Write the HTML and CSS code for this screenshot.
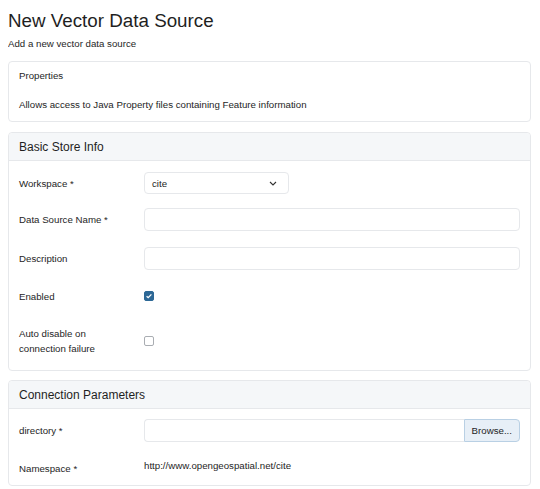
FILE: index.html
```html
<!DOCTYPE html>
<html lang="en">

<head>
  <meta charset="UTF-8">
  <meta name="viewport" content="width=device-width, initial-scale=1.0">
  <title>New Vector Data Source</title>
  <link rel="stylesheet" href="styles.css">
</head>

<body>
  <h1 class="page-title">New Vector Data Source</h1>
  <p class="page-sub">Add a new vector data source</p>

  <div class="panel panel-info">
    <div class="info-name">Properties</div>
    <div class="info-desc">Allows access to Java Property files containing Feature information</div>
  </div>

  <div class="panel">
    <div class="panel-head">Basic Store Info</div>
    <div class="panel-body">
      <div class="field field-select">
        <label>Workspace *</label>
        <div class="select">
          <span>cite</span>
          <svg width="8" height="5" viewBox="0 0 8 5"><path d="M1 1l3 3 3-3" fill="none" stroke="#333" stroke-width="1.1"/></svg>
        </div>
      </div>
      <div class="field field-name">
        <label>Data Source Name *</label>
        <input type="text" class="text-input">
      </div>
      <div class="field field-desc">
        <label>Description</label>
        <input type="text" class="text-input">
      </div>
      <div class="field field-enabled">
        <label>Enabled</label>
        <span class="check checked">
          <svg width="10" height="10" viewBox="0 0 10 10"><path d="M2.6 5.2l1.6 1.5 3.2-3.3" fill="none" stroke="#fff" stroke-width="1.3"/></svg>
        </span>
      </div>
      <div class="field field-auto">
        <label>Auto disable on<br>connection failure</label>
        <span class="check"></span>
      </div>
    </div>
  </div>

  <div class="panel panel-conn">
    <div class="panel-head">Connection Parameters</div>
    <div class="panel-body body-conn">
      <div class="field">
        <label>directory *</label>
        <div class="file-group">
          <input type="text" class="text-input">
          <a href="javascript:;" class="browse">Browse...</a>
        </div>
      </div>
      <div class="field field-ns">
        <label>Namespace *</label>
        <span class="ns-value">http://www.opengeospatial.net/cite</span>
      </div>
    </div>
  </div>
</body>

</html>
```

FILE: styles.css
```css
body {
  margin: 8px 9px 8px 8px;
  font-family: "Liberation Sans", Arial, sans-serif;
  font-size: 9.7px;
  color: #1e1e1e;
  background: #fff;
}

h1,
p,
div,
label {
  margin: 0px;
  padding: 0px;
}

.page-title {
  font-size: 18.8px;
  font-weight: normal;
  line-height: 26px;
  color: #1f1f1f;
}

.page-sub {
  margin-top: 4px;
  line-height: 12px;
}

.panel {
  border: 1px solid #e6e8eb;
  border-radius: 4px;
  margin-top: 10px;
  background: #fff;
}

.panel-info {
  margin-top: 11px;
  height: 59px;
  padding: 0px 10px;
}

.info-name {
  line-height: 12px;
  margin-top: 8px;
}

.info-desc {
  line-height: 12px;
  margin-top: 17px;
}

.panel-conn {
  margin-top: 9px;
}

.panel-head {
  background: #f5f7f9;
  border-bottom: 1px solid #e6e8eb;
  border-radius: 4px 4px 0px 0px;
  height: 27px;
  line-height: 28px;
  padding: 0px 10px;
  font-size: 12px;
  color: #1f1f1f;
}

.panel-body {
  padding: 11px 10px 14px 10px;
}

.field {
  display: flex;
  align-items: center;
}

.field label {
  width: 125px;
  flex: none;
  line-height: 15px;
}

.select {
  width: 145px;
  height: 22px;
  border: 1px solid #e6e8eb;
  border-radius: 4px;
  display: flex;
  align-items: center;
  justify-content: space-between;
  padding: 0px 11px 0px 7px;
  box-sizing: border-box;
}

.text-input {
  flex: 1;
  height: 23px;
  border: 1px solid #e6e8eb;
  border-radius: 4px;
  box-sizing: border-box;
  margin: 0px;
  padding: 0px 6px;
  font: inherit;
}

.field-name {
  margin-top: 14px;
}

.field-desc {
  margin-top: 16px;
}

.field-enabled {
  margin-top: 14px;
  height: 24px;
}

.field-auto {
  margin-top: 18px;
  height: 30px;
}

.check {
  width: 10px;
  height: 10px;
  box-sizing: border-box;
  border: 1px solid #a9adb2;
  border-radius: 2px;
  display: inline-flex;
}

.check.checked {
  background: #2d6896;
  border-color: #2d6896;
}

.check.checked svg {
  margin: -1px;
}

.body-conn {
  padding: 10px 10px 6px 10px;
}

.file-group {
  flex: 1;
  display: flex;
}

.file-group .text-input {
  border-radius: 4px 0px 0px 4px;
  border-right: none;
}

.browse {
  display: block;
  height: 23px;
  line-height: 21px;
  box-sizing: border-box;
  padding: 0px 7px;
  background: #e7eff7;
  border: 1px solid #b9d0e4;
  border-radius: 0px 4px 4px 0px;
  color: #1e1e1e;
  text-decoration: none;
}

.field-ns {
  margin-top: 13px;
  height: 24px;
  align-items: flex-start;
}

.field-ns label {
  margin-top: 6px;
}

.ns-value {
  margin-top: 3px;
  line-height: 15px;
}
```
